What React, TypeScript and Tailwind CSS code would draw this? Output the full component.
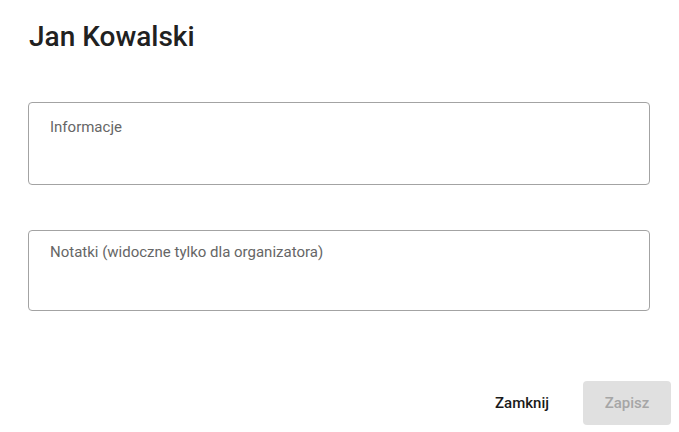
export default function App() {
  return (
    <div
      className="flex h-[432px] w-[679px] flex-col bg-white"
      style={{ fontFamily: "Roboto, 'Liberation Sans', sans-serif" }}
    >
      <h1 className="mt-[21px] px-[29px] text-[28px] font-medium leading-8 text-[#212121]">
        Jan Kowalski
      </h1>

      <div className="mt-[49px] flex flex-col gap-[45px] pl-[28px] pr-[29px]">
        <div className="h-[83px] rounded border border-[#a3a3a3] px-[21px] pt-[12px]">
          <p className="text-[15px] leading-6 text-[#666666]">Informacje</p>
        </div>
        <div className="h-[81px] rounded border border-[#a3a3a3] px-[21px] pt-[9px]">
          <p className="text-[15px] leading-6 text-[#666666]">
            Notatki (widoczne tylko dla organizatora)
          </p>
        </div>
      </div>

      <div className="mt-auto mb-[7px] flex items-center justify-end gap-[13px] pr-[8px]">
        <button className="h-11 px-[21px] text-[15px] font-medium text-[#1a1a1a]">
          Zamknij
        </button>
        <button
          disabled
          className="h-11 w-[88px] rounded bg-[#e0e0e0] text-[15px] font-medium text-[#a6a6a6]"
        >
          Zapisz
        </button>
      </div>
    </div>
  );
}
